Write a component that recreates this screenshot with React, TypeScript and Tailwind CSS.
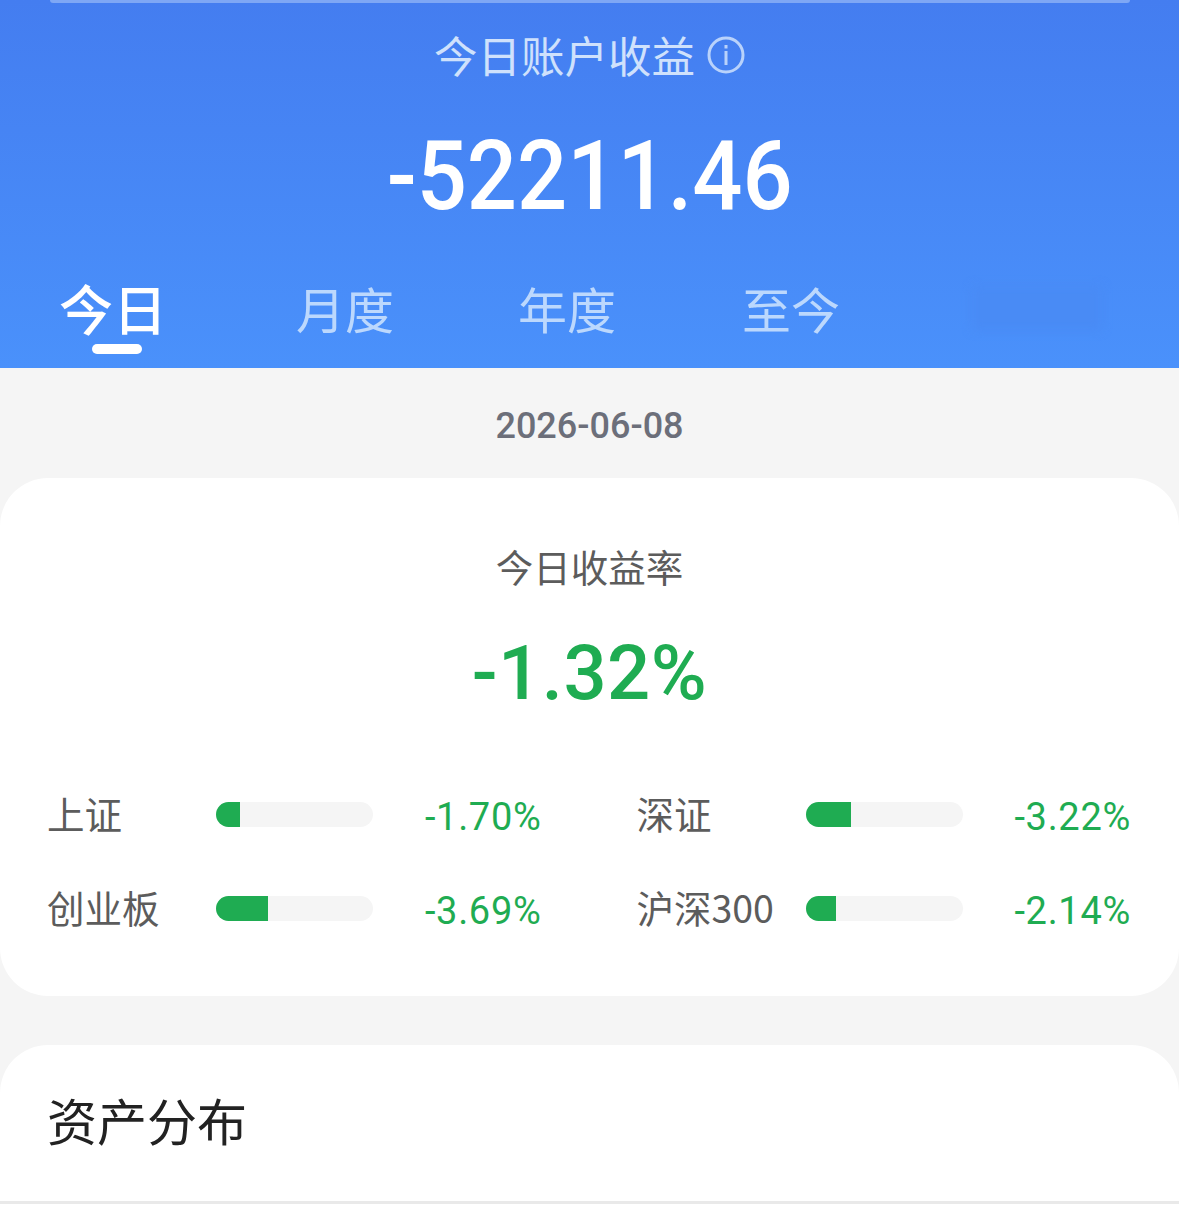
import React from 'react';

const cjk = "font-['Noto_Sans_CJK_SC',sans-serif]";
const num = "font-['Roboto','Noto_Sans_CJK_SC',sans-serif]";

const indexes = [
  { name: '上证', fill: 'w-[24px]', value: '-1.70%' },
  { name: '深证', fill: 'w-[45px]', value: '-3.22%' },
  { name: '创业板', fill: 'w-[52px]', value: '-3.69%' },
  { name: '沪深300', fill: 'w-[30px]', value: '-2.14%' },
];

const tabs = ['月度', '年度', '至今'];

const InfoIcon: React.FC = () => (
  <svg width="38" height="38" viewBox="0 0 38 38" fill="none" className="ml-[12px] shrink-0">
    <circle cx="19" cy="19" r="17" stroke="#b9d2fb" strokeWidth="3" />
    <rect x="17.5" y="9" width="3" height="3.5" fill="#b9d2fb" />
    <rect x="17.5" y="15" width="3" height="14" fill="#b9d2fb" />
  </svg>
);

export default function App() {
  return (
    <div className={`w-[1179px] h-[1227px] overflow-hidden bg-[#f5f5f5] ${cjk}`}>
      <header className="h-[368px] flex flex-col items-center bg-gradient-to-b from-[#447df0] to-[#4a91fb]">
        <div className="w-[1080px] h-[3px] shrink-0 rounded-b-[3px] bg-[#7ea7f5]" />
        <div className="mt-[24px] h-[56px] flex items-center text-[#cfe1fc] text-[43.5px] leading-[56px]">
          今日账户收益
          <InfoIcon />
        </div>
        <div className={`mt-[38px] h-[110px] text-white text-[96px] leading-[110px] font-medium scale-x-[0.92] ${num}`}>
          -52211.46
        </div>
        <nav className="mt-[46px] w-full pl-[59px] flex items-start">
          <div className="w-[108px] flex flex-col items-center text-white text-[54px] leading-[62px] font-medium">
            今日
            <div className="mt-[5px] ml-[7px] w-[50px] h-[10px] rounded-full bg-white" />
          </div>
          <div className="ml-[129px] flex items-center gap-[124px] text-[#bcd8fd] text-[49px] leading-[62px]">
            {tabs.map((tab, i) => (
              <span key={tab} className={i === 2 ? 'ml-[2px]' : ''}>{tab}</span>
            ))}
            <div className="w-[130px] h-[44px] ml-[8px] rounded bg-[#498bf5] blur-[5px]" />
          </div>
        </nav>
      </header>

      <div className={`h-[110px] flex items-center justify-center pt-[6px] text-[#6c6f7a] text-[36px] font-medium ${num}`}>
        2026-06-08
      </div>

      <section className="h-[518px] rounded-[48px] bg-white px-[48px] pt-[64px]">
        <h2 className="text-center text-[#5c5c5c] text-[37.5px] leading-[48px]">今日收益率</h2>
        <div className={`mt-[38px] text-center text-[#1fac52] text-[76px] leading-[90px] tracking-[0.5px] font-medium ${num}`}>-1.32%</div>
        <div className="mt-[84px] grid grid-cols-2 gap-x-[96px] gap-y-[69px]">
          {indexes.map((item) => (
            <div key={item.name} className="h-[25px] flex items-center">
              <span className="w-[168px] shrink-0 -ml-[1px] mr-[1px] pb-[5px] text-[#5c5c5c] text-[37.5px] leading-[25px] whitespace-nowrap">
                {item.name}
              </span>
              <div className="w-[157px] h-[25px] shrink-0 rounded-full bg-[#f5f5f5] overflow-hidden">
                <div className={`h-full bg-[#1fac52] ${item.fill}`} />
              </div>
              <span className={`flex-1 text-right text-[#1fac52] text-[38px] leading-[25px] pt-[6px] tracking-[0.7px] ${num}`}>
                {item.value}
              </span>
            </div>
          ))}
        </div>
      </section>

      <section className="mt-[49px] h-[190px] rounded-t-[48px] bg-white">
        <h2 className="h-[159px] pl-[47px] pt-[43px] text-[#222222] text-[50px] leading-[62px] border-b-[3px] border-[#e9e9e9] box-border">
          资产分布
        </h2>
      </section>
    </div>
  );
}
